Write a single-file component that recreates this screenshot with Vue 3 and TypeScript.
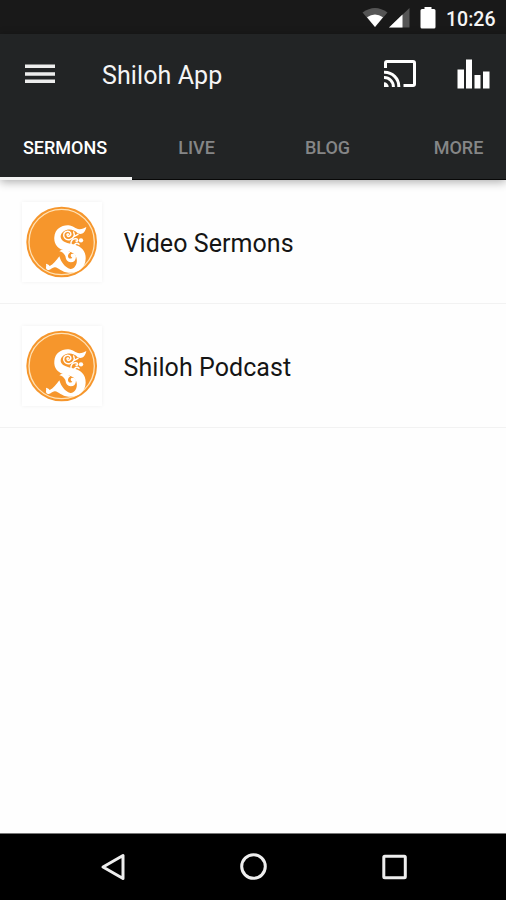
<script setup lang="ts">
import { ref } from 'vue'

interface Tab { id: string; label: string }

const tabs: Tab[] = [
  { id: 'sermons', label: 'SERMONS' },
  { id: 'live', label: 'LIVE' },
  { id: 'blog', label: 'BLOG' },
  { id: 'more', label: 'MORE' },
]
const active = ref<string>('sermons')
const items: string[] = ['Video Sermons', 'Shiloh Podcast']
</script>

<template>
  <div class="screen">
    <div class="status">
      <svg class="wifi" width="26" height="21" viewBox="0 0 26 21">
        <path d="M.5 5.500Q13 -3.500 25.500 5.500L13 20Z" fill="#555" />
        <path d="M5 10.200Q13 5 21 10.200L13 20Z" fill="#fff" />
      </svg>
      <svg class="signal" width="21" height="21" viewBox="0 0 21 21">
        <path d="M0 20.500L20.500 1V20.500Z" fill="#555" />
        <path d="M0 20.500L13.500 7.500V20.500Z" fill="#fff" />
      </svg>
      <svg class="battery" width="16" height="22" viewBox="0 0 16 22">
        <path d="M4.500 0H11.500V2H14Q15.500 2 15.500 3.500V20Q15.500 21.500 14 21.500H2Q.5 21.500 .5 20V3.500Q.5 2 2 2H4.500Z" fill="#fff" />
      </svg>
      <span class="clock">10:26</span>
    </div>

    <header class="header">
      <div class="toolbar">
        <svg class="menu" width="30" height="20" viewBox="0 0 30 20">
          <path d="M0 2.300H30M0 9.900H30M0 17.300H30" stroke="#ededed" stroke-width="3.500" />
        </svg>
        <h1 class="title">Shiloh App</h1>
        <svg class="cast" width="32" height="27" viewBox="0 0 32 27">
          <g fill="none" stroke="#fff" stroke-width="3">
            <path d="M1.500 8V3Q1.500 1.500 3 1.500H29Q30.500 1.500 30.500 3V24Q30.500 25.500 29 25.500H19.500" />
            <path d="M0 12.200A14.300 14.300 0 0 1 14.800 27M0 17.600A9.200 9.200 0 0 1 9.400 27" />
          </g>
          <path d="M0 22.300A4.700 4.700 0 0 1 4.700 27H0Z" fill="#fff" />
        </svg>
        <svg class="chart" width="33" height="30" viewBox="0 0 33 30">
          <path d="M.5 10.500H7V29.500H.5ZM9 .5H15V29.500H9ZM17.500 16H23.500V29.500H17.500ZM26 12.500H32.500V29.500H26Z" fill="#fff" />
        </svg>
      </div>
      <nav class="tabs">
        <button v-for="tab in tabs" :key="tab.id" class="tab" :class="{ active: active === tab.id }" @click="active = tab.id">
          {{ tab.label }}
        </button>
      </nav>
    </header>

    <main class="list">
      <div v-for="item in items" :key="item" class="row">
        <div class="thumb">
          <svg width="80" height="80" viewBox="6 5 240 240">
            <circle cx="125" cy="125" r="106" fill="#f6962c" />
            <circle cx="125" cy="125" r="98" fill="none" stroke="#ffe2b6" stroke-width="4" />
            <g fill="#fff">
              <path d="M199 80C195 98 186 104 173 99C157 80 126 86 122 107C121 121 136 127 155 131C181 135 198 150 197 175C196 203 174 219 145 217C125 216 116 202 105 201C96 200 91 213 82 208C76 204 77 196 84 194L88 198C100 192 109 181 118 168C123 185 134 201 151 206C164 207 173 190 170 176C168 160 154 154 138 151C113 147 101 131 103 110C105 86 125 74 145 75C159 76 167 86 178 87C187 87 193 82 199 80Z" />
              <path d="M118 153Q126 144 140 149L151 156Q140 164 146 173Q151 177 157 172Q149 168 154 161Q167 158 168 169Q167 186 152 186Q138 184 136 167Q130 155 118 153Z" />
              <circle cx="183" cy="120" r="6.500" />
              <path d="M78 190Q92 193 90 205L80 207Z" />
            </g>
            <g fill="none" stroke="#fff" stroke-width="4.500" stroke-linecap="round">
              <path d="M146 102C144 99 139 102 142 106C146 111 155 105 152 98C148 90 136 91 132 99C128 110 137 120 148 118C160 116 166 106 161 95" />
              <path d="M153 134C151 122 158 114 168 115C175 116 174 125 168 122M163 134Q170 125 177 132M163 108L174 102" />
            </g>
          </svg>
        </div>
        <span class="name">{{ item }}</span>
      </div>
    </main>

    <footer class="navbar">
      <svg width="26" height="28" viewBox="0 0 26 28"><path d="M3 14L23 2.500V25.500Z" class="line" /></svg>
      <svg width="28" height="28" viewBox="0 0 28 28"><circle cx="13.500" cy="13.500" r="11.800" class="line" /></svg>
      <svg width="26" height="26" viewBox="0 0 26 26"><rect x="1.800" y="2.200" width="21.500" height="21.500" rx="1" class="line" /></svg>
    </footer>
  </div>
</template>

<style>
body { margin: 0; }
</style>

<style scoped>
.screen { width: 506px; height: 900px; display: flex; flex-direction: column; background: #fefefe; font-family: Roboto, sans-serif; overflow: hidden; }
.status { flex: none; height: 34px; box-sizing: border-box; padding: 7px 11px 0 0; display: flex; justify-content: flex-end; align-items: flex-start; background: #191919; }
.signal { margin-left: 1px; }
.battery { margin-left: 10px; }
.clock { width: 49px; margin-left: 10px; padding-top: 1px; font-size: 19.500px; font-weight: 500; line-height: 23px; color: #f5f5f5; white-space: nowrap; }
.header { position: relative; z-index: 1; flex: none; height: 146px; box-sizing: border-box; background: #222425; border-bottom: 1px solid #080808; box-shadow: 0 2px 9px rgba(0, 0, 0, .33); }
.toolbar { height: 80px; display: flex; align-items: center; padding: 0 16px 0 25px; }
.title { flex: 1; margin: 2px 0 0 47px; font-size: 25px; font-weight: 400; letter-spacing: .1px; color: #f5f5f5; }
.cast { margin-bottom: 1px; }
.chart { margin: 0 0 1px 41px; }
.tabs { height: 66px; display: flex; }
.tab { flex: none; width: 131px; height: 66px; box-sizing: border-box; padding: 4px 0 0; border: 0; border-bottom: 3px solid transparent; background: none; font: 500 18px/59px Roboto, sans-serif; color: #858687; }
.tab.active { width: 132px; margin-right: -1px; padding-right: 2px; color: #fff; border-bottom-color: #f4f4f4; }
.list { flex: 1; }
.row { height: 124px; box-sizing: border-box; display: flex; align-items: center; padding-left: 22px; border-bottom: 1px solid #f2f2f2; }
.thumb { width: 80px; height: 80px; background: #fff; box-shadow: 0 0 4px rgba(0, 0, 0, .06); }
.thumb svg { display: block; }
.name { margin-left: 21.500px; padding-top: 3px; font-size: 25px; letter-spacing: .07px; color: #151515; }
.navbar { flex: none; height: 67px; box-sizing: border-box; border-top: 1px solid #777; background: #000; display: flex; align-items: center; padding-left: 100px; }
.navbar svg + svg { margin-left: 114px; }
.line { fill: none; stroke: #eee; stroke-width: 3; stroke-linejoin: round; }
</style>
